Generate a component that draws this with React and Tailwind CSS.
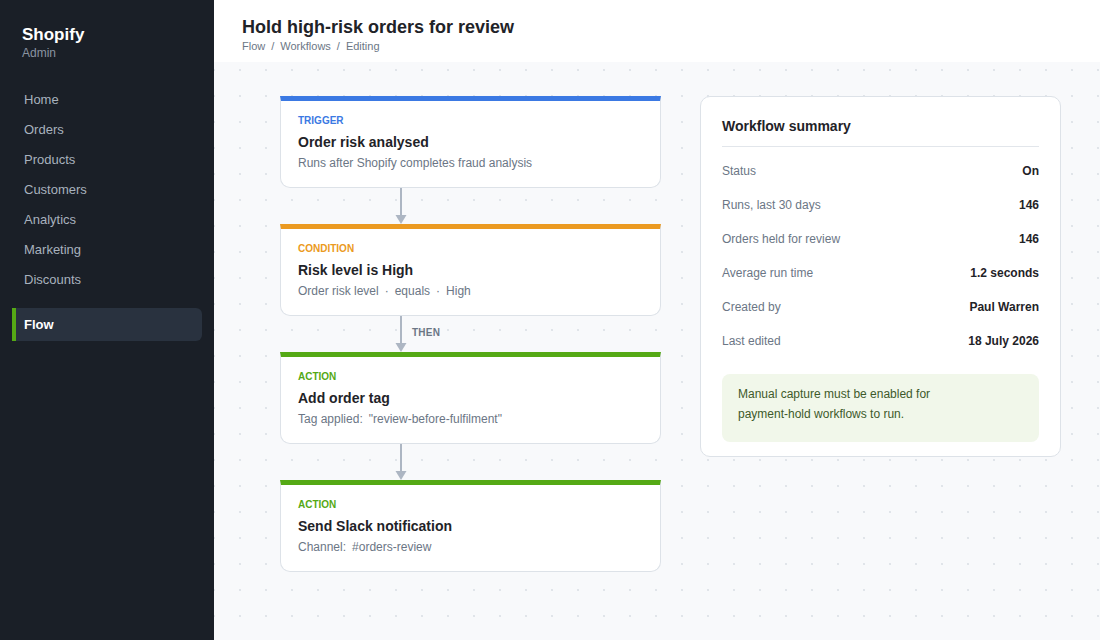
const navItems = ['Home', 'Orders', 'Products', 'Customers', 'Analytics', 'Marketing', 'Discounts']

const summaryRows = [
  ['Status', 'On'],
  ['Runs, last 30 days', '146'],
  ['Orders held for review', '146'],
  ['Average run time', '1.2 seconds'],
  ['Created by', 'Paul Warren'],
  ['Last edited', '18 July 2026'],
]

const accents = {
  trigger: { bar: 'border-t-[#3b79e3]', label: 'text-[#3b79e3]' },
  condition: { bar: 'border-t-[#eb9a21]', label: 'text-[#eb9a21]' },
  action: { bar: 'border-t-[#55a915]', label: 'text-[#55a915]' },
}

function Sidebar() {
  return (
    <aside className="w-[214px] shrink-0 bg-[#1a1f27] flex flex-col">
      <div className="pl-[22px] pt-[24px]">
        <div className="text-[17px] leading-[21px] font-bold text-white">Shopify</div>
        <div className="text-[12px] leading-[16px] text-[#8a94a2]">Admin</div>
      </div>
      <nav className="mt-[24px] px-3">
        <ul>
          {navItems.map((item) => (
            <li
              key={item}
              className="h-[30px] flex items-center border-l-4 border-transparent pl-2 text-[13px] text-[#a8b2be]"
            >
              {item}
            </li>
          ))}
        </ul>
        <div className="mt-[13px] h-[33px] flex items-center border-l-4 border-[#55a915] bg-[#29323f] rounded-r-md pl-2 text-[13px] font-bold text-white">
          Flow
        </div>
      </nav>
    </aside>
  )
}

function Step({ kind, label, title, children }) {
  const accent = accents[kind]
  return (
    <div
      className={`bg-white border border-[#dde2e8] border-t-[5px] ${accent.bar} rounded-b-[10px] pl-[17px] pr-4 pt-[13px] pb-[16px]`}
    >
      <div className={`text-[10px] leading-[14px] font-bold uppercase ${accent.label}`}>{label}</div>
      <div className="mt-[4px] text-[14px] leading-[20px] font-bold text-[#1f2328]">{title}</div>
      <div className="mt-[3px] text-[12px] leading-[16px] text-[#6b7685]">{children}</div>
    </div>
  )
}

function Connector({ label }) {
  return (
    <div className="h-9 flex">
      <svg className="ml-[115px] shrink-0" width="12" height="36" viewBox="0 0 12 36">
        <rect x="5" y="0" width="2" height="28" fill="#adb6c3" />
        <polygon points="0.5,27 11.5,27 6,36" fill="#adb6c3" />
      </svg>
      {label && (
        <span className="ml-[5px] self-center mt-[-4px] text-[10px] font-bold tracking-wide text-[#6b7685]">
          {label}
        </span>
      )}
    </div>
  )
}

function Dot() {
  return <span className="mx-[6px]">·</span>
}

function Summary() {
  return (
    <div className="w-[361px] shrink-0 self-start bg-white border border-[#dde2e8] rounded-[10px] px-[21px] pt-[19px] pb-[14px]">
      <div className="pb-[10px] border-b border-[#e2e6eb] text-[14px] leading-[20px] font-bold text-[#1f2328]">
        Workflow summary
      </div>
      <div className="pt-[7px]">
        {summaryRows.map(([k, v]) => (
          <div key={k} className="h-[34px] flex items-center justify-between text-[12px]">
            <span className="text-[#6b7685]">{k}</span>
            <span className="font-bold text-[#1f2328]">{v}</span>
          </div>
        ))}
      </div>
      <div className="mt-[16px] bg-[#f1f7ea] rounded-lg pl-4 pr-4 pt-[10px] pb-[18px] text-[12px] leading-[20px] text-[#3e5a2b]">
        <p className="max-w-[240px]">Manual capture must be enabled for payment-hold workflows to run.</p>
      </div>
    </div>
  )
}

export default function App() {
  return (
    <div className="flex w-full h-[640px] overflow-hidden font-['Liberation_Sans',Arial,sans-serif]">
      <Sidebar />
      <main className="flex-1 flex flex-col min-w-0">
        <header className="h-[62px] shrink-0 bg-white pl-[28px] pt-[15px]">
          <h1 className="text-[18px] leading-[24px] font-bold text-[#1f2328]">
            Hold high-risk orders for review
          </h1>
          <div className="text-[11px] leading-[14px] text-[#6b7685]">
            Flow<span className="mx-1.5">/</span>Workflows<span className="mx-1.5">/</span>Editing
          </div>
        </header>
        <div className="flex-1 bg-[#f8f9fb] bg-[radial-gradient(circle,#e0e4e9_0.7px,transparent_1px)] bg-[size:26px_26px] bg-[position:13px_21px] pl-[66px] pt-[34px] flex gap-[39px]">
          <div className="w-[381px] shrink-0">
            <Step kind="trigger" label="Trigger" title="Order risk analysed">
              Runs after Shopify completes fraud analysis
            </Step>
            <Connector />
            <Step kind="condition" label="Condition" title="Risk level is High">
              Order risk level<Dot />equals<Dot />High
            </Step>
            <Connector label="THEN" />
            <Step kind="action" label="Action" title="Add order tag">
              Tag applied:<span className="ml-[6px]">"review-before-fulfilment"</span>
            </Step>
            <Connector />
            <Step kind="action" label="Action" title="Send Slack notification">
              Channel:<span className="ml-[6px]">#orders-review</span>
            </Step>
          </div>
          <Summary />
        </div>
      </main>
    </div>
  )
}
